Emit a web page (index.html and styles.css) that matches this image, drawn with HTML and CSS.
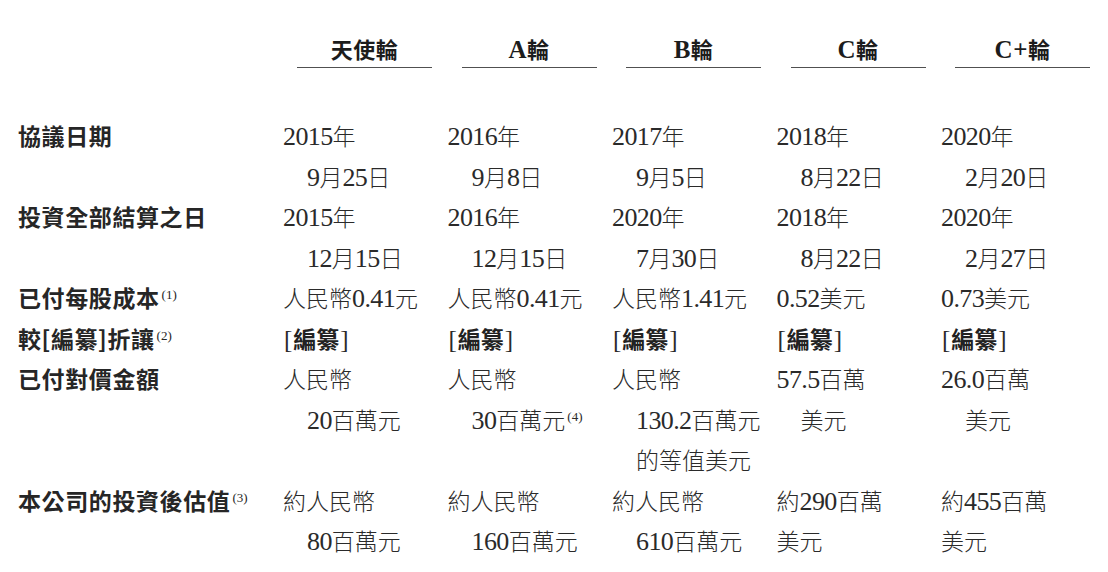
FILE: index.html
```html
<!DOCTYPE html>
<html lang="zh-Hant">
<head>
<meta charset="utf-8">
<title>投資輪次</title>
<link rel="stylesheet" href="styles.css">
</head>
<body>
<div class="table">
  <div class="corner"></div>
  <div class="hd"><div class="ht">天使輪</div></div>
  <div class="hd"><div class="ht"><span class="hn">A</span>輪</div></div>
  <div class="hd"><div class="ht"><span class="hn">B</span>輪</div></div>
  <div class="hd"><div class="ht"><span class="hn">C</span>輪</div></div>
  <div class="hd"><div class="ht"><span class="hn">C+</span>輪</div></div>

  <div class="lab">協議日期</div>
  <div class="val"><div><span class="n">2015</span>年</div><div class="ind"><span class="n">9</span>月<span class="n">25</span>日</div></div>
  <div class="val"><div><span class="n">2016</span>年</div><div class="ind"><span class="n">9</span>月<span class="n">8</span>日</div></div>
  <div class="val"><div><span class="n">2017</span>年</div><div class="ind"><span class="n">9</span>月<span class="n">5</span>日</div></div>
  <div class="val"><div><span class="n">2018</span>年</div><div class="ind"><span class="n">8</span>月<span class="n">22</span>日</div></div>
  <div class="val"><div><span class="n">2020</span>年</div><div class="ind"><span class="n">2</span>月<span class="n">20</span>日</div></div>

  <div class="lab">投資全部結算之日</div>
  <div class="val"><div><span class="n">2015</span>年</div><div class="ind"><span class="n">12</span>月<span class="n">15</span>日</div></div>
  <div class="val"><div><span class="n">2016</span>年</div><div class="ind"><span class="n">12</span>月<span class="n">15</span>日</div></div>
  <div class="val"><div><span class="n">2020</span>年</div><div class="ind"><span class="n">7</span>月<span class="n">30</span>日</div></div>
  <div class="val"><div><span class="n">2018</span>年</div><div class="ind"><span class="n">8</span>月<span class="n">22</span>日</div></div>
  <div class="val"><div><span class="n">2020</span>年</div><div class="ind"><span class="n">2</span>月<span class="n">27</span>日</div></div>

  <div class="lab">已付每股成本<span class="fn">(1)</span></div>
  <div class="val"><div>人民幣<span class="n">0.41</span>元</div></div>
  <div class="val"><div>人民幣<span class="n">0.41</span>元</div></div>
  <div class="val"><div>人民幣<span class="n">1.41</span>元</div></div>
  <div class="val"><div><span class="n">0.52</span>美元</div></div>
  <div class="val"><div><span class="n">0.73</span>美元</div></div>

  <div class="lab">較[編纂]折讓<span class="fn">(2)</span></div>
  <div class="val"><div><span class="br">[</span><b>編纂</b><span class="br">]</span></div></div>
  <div class="val"><div><span class="br">[</span><b>編纂</b><span class="br">]</span></div></div>
  <div class="val"><div><span class="br">[</span><b>編纂</b><span class="br">]</span></div></div>
  <div class="val"><div><span class="br">[</span><b>編纂</b><span class="br">]</span></div></div>
  <div class="val"><div><span class="br">[</span><b>編纂</b><span class="br">]</span></div></div>

  <div class="lab">已付對價金額</div>
  <div class="val"><div>人民幣</div><div class="ind"><span class="n">20</span>百萬元</div></div>
  <div class="val"><div>人民幣</div><div class="ind"><span class="n">30</span>百萬元<span class="fn">(4)</span></div></div>
  <div class="val"><div>人民幣</div><div class="ind"><span class="n">130.2</span>百萬元</div><div class="ind">的等值美元</div></div>
  <div class="val"><div><span class="n">57.5</span>百萬</div><div class="ind">美元</div></div>
  <div class="val"><div><span class="n">26.0</span>百萬</div><div class="ind">美元</div></div>

  <div class="lab">本公司的投資後估值<span class="fn">(3)</span></div>
  <div class="val"><div>約人民幣</div><div class="ind"><span class="n">80</span>百萬元</div></div>
  <div class="val"><div>約人民幣</div><div class="ind"><span class="n">160</span>百萬元</div></div>
  <div class="val"><div>約人民幣</div><div class="ind"><span class="n">610</span>百萬元</div></div>
  <div class="val"><div>約<span class="n">290</span>百萬</div><div>美元</div></div>
  <div class="val"><div>約<span class="n">455</span>百萬</div><div>美元</div></div>
</div>
</body>
</html>
```

FILE: styles.css
```css
html, body {
  margin: 0;
  padding: 0;
  background: #ffffff;
}

.table {
  display: grid;
  grid-template-columns: 265px repeat(5, 164.5px);
  padding: 30px 0 0 18px;
}

.hd {
  padding-left: 14px;
  margin-bottom: 47px;
}

.ht {
  width: 135px;
  text-align: center;
  line-height: 37px;
  border-bottom: 1.6px solid #505050;
  font-family: "Noto Sans CJK TC", sans-serif;
  font-weight: 700;
  font-size: 22px;
  color: #1c1c1c;
  letter-spacing: 0.5px;
}

.hn {
  font-family: "Liberation Serif", serif;
  font-weight: 700;
  font-size: 25px;
  line-height: 1;
}

.lab {
  font-family: "Noto Sans CJK TC", sans-serif;
  font-weight: 700;
  font-size: 23px;
  letter-spacing: 0.6px;
  line-height: 40.5px;
  color: #262626;
  white-space: nowrap;
}

.val {
  font-family: "Noto Sans CJK TC", sans-serif;
  font-weight: 300;
  font-size: 23px;
  line-height: 40.5px;
  color: #2a2a2a;
  white-space: nowrap;
}

.val b {
  font-weight: 700;
  color: #222;
}

.ind {
  padding-left: 24px;
}

.n {
  font-family: "Liberation Serif", serif;
  font-size: 26px;
  letter-spacing: -0.6px;
  line-height: 1;
}

.br {
  font-family: "Liberation Serif", serif;
  font-size: 25px;
  line-height: 1;
  padding: 0 1px;
}

.fn {
  font-family: "Liberation Serif", serif;
  font-weight: 400;
  font-size: 13px;
  letter-spacing: 0;
  line-height: 1;
  vertical-align: 8px;
  margin-left: 2px;
}
```
